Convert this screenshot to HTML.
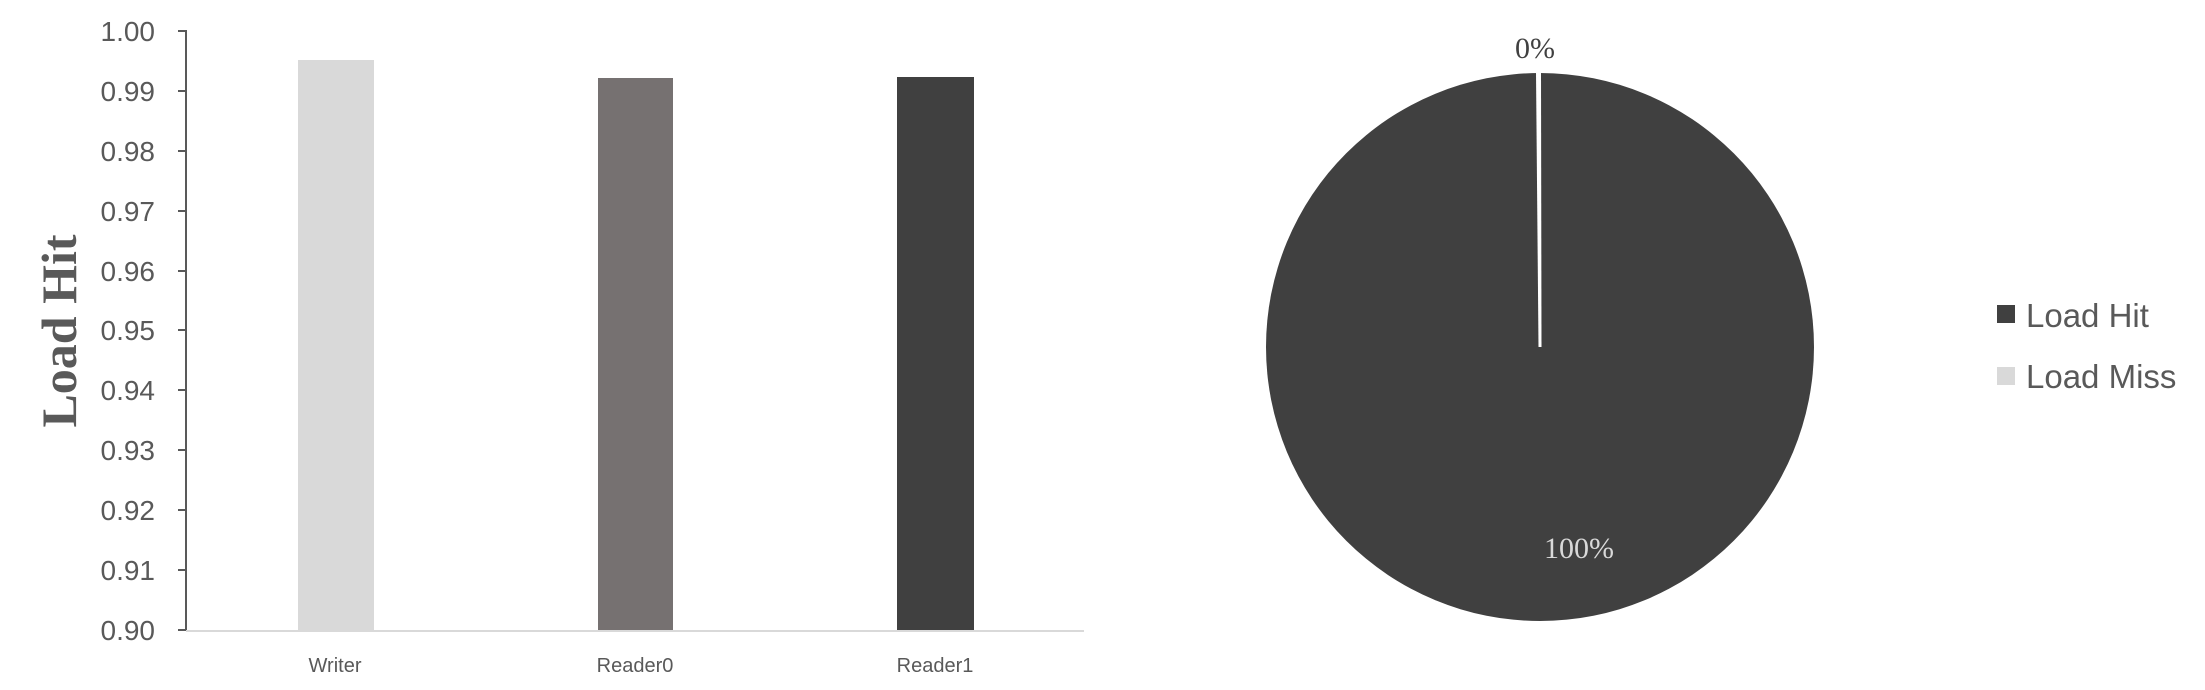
<!DOCTYPE html>
<html><head><meta charset="utf-8"><style>
html,body{margin:0;padding:0;background:#fff;}
</style></head><body>
<svg width="2205" height="690" xmlns="http://www.w3.org/2000/svg" style="display:block">
<g font-family="Liberation Sans, sans-serif" fill="#595959" font-size="28" text-anchor="end">
<text x="155" y="41">1.00</text>
<text x="155" y="101">0.99</text>
<text x="155" y="161">0.98</text>
<text x="155" y="221">0.97</text>
<text x="155" y="281">0.96</text>
<text x="155" y="340">0.95</text>
<text x="155" y="400">0.94</text>
<text x="155" y="460">0.93</text>
<text x="155" y="520">0.92</text>
<text x="155" y="580">0.91</text>
<text x="155" y="640">0.90</text>
</g>
<g stroke="#595959" stroke-width="2">
<line x1="186" y1="30" x2="186" y2="631"/>
<line x1="178" y1="31" x2="186" y2="31"/><line x1="178" y1="91" x2="186" y2="91"/>
<line x1="178" y1="151" x2="186" y2="151"/><line x1="178" y1="211" x2="186" y2="211"/>
<line x1="178" y1="271" x2="186" y2="271"/><line x1="178" y1="330" x2="186" y2="330"/>
<line x1="178" y1="390" x2="186" y2="390"/><line x1="178" y1="450" x2="186" y2="450"/>
<line x1="178" y1="510" x2="186" y2="510"/><line x1="178" y1="570" x2="186" y2="570"/>
<line x1="178" y1="630" x2="186" y2="630"/>
</g>
<line x1="186" y1="631" x2="1084" y2="631" stroke="#d9d9d9" stroke-width="2"/>
<rect x="298" y="60" width="76" height="570" fill="#d9d9d9"/>
<rect x="598" y="78" width="75" height="552" fill="#767171"/>
<rect x="897" y="77" width="77" height="553" fill="#404040"/>
<g font-family="Liberation Sans, sans-serif" fill="#595959" font-size="20" text-anchor="middle">
<text x="335" y="672">Writer</text>
<text x="635" y="672">Reader0</text>
<text x="935" y="672">Reader1</text>
</g>
<text transform="translate(76,331) rotate(-90)" font-family="Liberation Serif, serif" font-weight="bold" font-size="50" fill="#595959" text-anchor="middle">Load Hit</text>
<circle cx="1540" cy="347" r="274" fill="#404040"/>
<polygon points="1536,72 1541,72 1541.5,347 1538.5,347" fill="#fff"/>
<text x="1535" y="58" font-family="Liberation Serif, serif" font-size="30" fill="#404040" text-anchor="middle">0%</text>
<text x="1579" y="558" font-family="Liberation Serif, serif" font-size="30" fill="#d9d9d9" text-anchor="middle">100%</text>
<rect x="1997" y="305" width="18" height="18" fill="#404040"/>
<rect x="1997" y="367" width="18" height="18" fill="#d9d9d9"/>
<g font-family="Liberation Sans, sans-serif" fill="#595959" font-size="33">
<text x="2026" y="327">Load Hit</text>
<text x="2026" y="388">Load Miss</text>
</g>
</svg>
</body></html>
